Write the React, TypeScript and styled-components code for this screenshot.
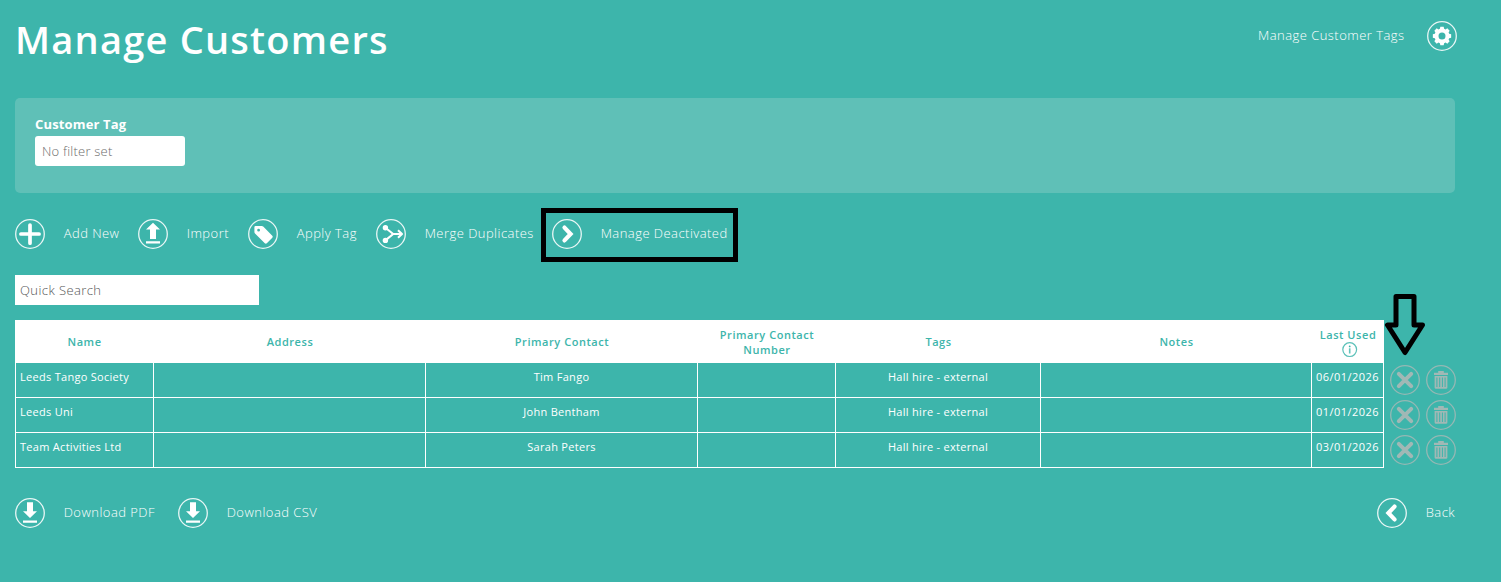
import React from "react";
import styled, { createGlobalStyle } from "styled-components";

const TEAL = "#3db5ab";

const GlobalStyle = createGlobalStyle`
  * { box-sizing: border-box; }
  html, body { margin: 0; background: ${TEAL}; }
  body { font-family: "Open Sans", sans-serif; color: #fff; overflow: hidden; }
`;

const Page = styled.main`
  width: 1501px;
  height: 582px;
  padding: 0 44px 0 15px;
  background: ${TEAL};
`;

const Header = styled.header`
  display: flex;
  justify-content: space-between;
  height: 98px;
`;

const Title = styled.h1`
  margin: 13px 0 0;
  font-size: 38px;
  line-height: 52px;
  font-weight: 600;
  letter-spacing: 1.23px;
  white-space: nowrap;
`;

const HeaderLink = styled.div`
  display: flex;
  gap: 22.5px;
  margin-top: 21px;
  height: 30px;
`;

const Label = styled.span`
  font-size: 13px;
  line-height: 18px;
  padding-top: 5px;
  font-weight: 300;
  letter-spacing: 0.46px;
  white-space: nowrap;
`;

const FilterPanel = styled.section`
  width: 1440px;
  height: 95px;
  padding: 17px 20px;
  border-radius: 5px;
  background: #5fc0b7;
`;

const FilterLabel = styled.label`
  display: block;
  height: 21px;
  font-size: 13px;
  line-height: 19px;
  font-weight: 700;
  letter-spacing: 0.15px;
`;

const Field = styled.div`
  height: 30px;
  background: #fff;
  font-size: 13px;
  line-height: 30px;
  font-weight: 300;
`;

const FilterField = styled(Field)`
  width: 150px;
  padding-left: 7px;
  border-radius: 3px;
  color: #6c6c6c;
  letter-spacing: 0.22px;
`;

const SearchField = styled(Field)`
  width: 244px;
  padding-left: 5px;
  color: #555;
  letter-spacing: 0.42px;
`;

const Toolbar = styled.nav`
  display: flex;
  height: 82px;
  padding-top: 26px;
`;

const Action = styled.div<{ $width?: number }>`
  position: relative;
  display: flex;
  gap: 18.7px;
  width: ${(p) => (p.$width ? p.$width + "px" : "auto")};
  height: 30px;
`;

const Highlight = styled.div`
  position: absolute;
  left: -11px;
  top: -11px;
  width: 197px;
  height: 54px;
  border: 5px solid #000;
`;

const TableArea = styled.section`
  position: relative;
  margin-top: 15px;
`;

const Row = styled.div<{ $head?: boolean }>`
  display: grid;
  grid-template-columns: 139px 272px 272px 138px 205px 271px 72px 42px 30px;
  height: ${(p) => (p.$head ? 43 : 35)}px;
`;

const HeadCell = styled.div<{ $tall?: boolean }>`
  padding-top: ${(p) => (p.$tall ? 7 : 14)}px;
  background: #fff;
  color: ${TEAL};
  font-size: 11px;
  line-height: 15px;
  font-weight: 600;
  letter-spacing: 0.55px;
  text-align: center;
  white-space: pre-line;
`;

const Cell = styled.div<{ $left?: boolean }>`
  padding: 6px 0 0 ${(p) => (p.$left ? 4 : 0)}px;
  border: solid #fff;
  border-width: ${(p) => (p.$left ? "0 1px 1px 1px" : "0 1px 1px 0")};
  font-size: 11px;
  line-height: 15px;
  letter-spacing: 0.29px;
  text-align: ${(p) => (p.$left ? "left" : "center")};
  white-space: nowrap;
`;

const DateCell = styled(Cell)`
  letter-spacing: 0.45px;
`;

const RowIcon = styled.div<{ $indent?: boolean }>`
  padding: 2px 0 0 ${(p) => (p.$indent ? 6 : 0)}px;
  color: #a1b8b5;
`;

const Pointer = styled.svg`
  position: absolute;
  left: 1369px;
  top: -27px;
`;

const Footer = styled.footer`
  display: flex;
  padding-top: 30px;
`;

const BackAction = styled(Action)`
  margin-left: auto;
  width: 80px;
`;

const Svg = styled.svg`
  display: block;
  flex: none;
`;

const InfoSvg = styled(Svg)`
  margin: 0 auto;
  position: relative;
  left: 1.5px;
`;

type IconName = "gear" | "plus" | "upload" | "tag" | "merge" | "right" | "left" | "download" | "cross" | "bin";

const gearPath = (() => {
  const pts: string[] = [];
  for (let i = 0; i < 8; i++) {
    const a = (i * Math.PI) / 4;
    [[-0.29, 7.5], [-0.18, 9.3], [0.18, 9.3], [0.29, 7.5]].forEach(([d, r]) => {
      pts.push(`${(15 + r * Math.sin(a + d)).toFixed(2)} ${(15 - r * Math.cos(a + d)).toFixed(2)}`);
    });
  }
  return `M${pts.join("L")}ZM15 11.5a3.5 3.5 0 1 0 0 7a3.5 3.5 0 1 0 0-7Z`;
})();

const glyphs: Record<IconName, React.ReactNode> = {
  gear: <path d={gearPath} fill="currentColor" fillRule="evenodd" />,
  plus: <path d="M15 6V24.2M5.9 15H24.1" stroke="currentColor" strokeWidth="3.7" strokeLinecap="round" />,
  upload: <path d="M15 3.8L22 10.6H18V20H12V10.6H8ZM8 22.3H22V24.4H8Z" fill="currentColor" />,
  tag: (
    <path
      d="M7.6 7H13.8Q14.6 7 15.2 7.6L24.3 16.8Q25.3 17.8 24.3 18.8L18.8 24.2Q17.8 25.1 16.8 24.2L7 14.4Q6.4 13.8 6.4 13V8.2Q6.4 7 7.6 7ZM10.6 9.8A1.4 1.4 0 1 0 10.6 12.6A1.4 1.4 0 1 0 10.6 9.8Z"
      fill="currentColor"
      fillRule="evenodd"
    />
  ),
  merge: (
    <>
      <circle cx="9.4" cy="8.8" r="2.7" fill="currentColor" />
      <circle cx="9.4" cy="21.4" r="2.7" fill="currentColor" />
      <path d="M9.4 8.8L17.2 15L9.4 21.4M17.2 15H25.5M22 11.3L26 15L22 18.7" stroke="currentColor" strokeWidth="2.1" fill="none" strokeLinejoin="round" />
    </>
  ),
  right: <path d="M12.5 8.6L18.6 15L12.5 21.4" stroke="currentColor" strokeWidth="4.2" strokeLinecap="round" fill="none" />,
  left: <path d="M17.5 8.6L11.4 15L17.5 21.4" stroke="currentColor" strokeWidth="4.2" strokeLinecap="round" fill="none" />,
  download: <path d="M12 4.2H18V13.2H22L15 20L8 13.2H12ZM8 22.6H22V24.7H8Z" fill="currentColor" />,
  cross: <path d="M8.8 8.8L21.2 21.2M21.2 8.8L8.8 21.2" stroke="currentColor" strokeWidth="4" strokeLinecap="round" />,
  bin: (
    <>
      <path d="M12.2 6H17.8V8H12.2ZM8 7.8H22V10H8Z" fill="currentColor" />
      <path
        d="M8.6 11H21.4V22.4Q21.4 23.8 20 23.8H10Q8.6 23.8 8.6 22.4ZM10.4 12.4V22H11.4V12.4ZM13.2 12.4V22H14.2V12.4ZM15.9 12.4V22H16.9V12.4ZM18.6 12.4V22H19.6V12.4Z"
        fill="currentColor"
        fillRule="evenodd"
      />
    </>
  ),
};

const CircleIcon = ({ name }: { name: IconName }) => (
  <Svg width="30" height="30" viewBox="0 0 30 30" fill="none">
    <circle cx="15" cy="15" r="14.3" stroke="currentColor" strokeWidth="1.3" strokeOpacity="0.88" />
    {glyphs[name]}
  </Svg>
);

const InfoIcon = () => (
  <InfoSvg width="16" height="16" viewBox="0 0 16 16" fill="none">
    <circle cx="7.7" cy="7.6" r="6.9" stroke={TEAL} strokeWidth="1.2" strokeOpacity="0.85" />
    <path d="M7.7 6.3V11.5" stroke={TEAL} strokeWidth="1.6" strokeOpacity="0.8" />
    <circle cx="7.7" cy="4.4" r="0.9" fill={TEAL} />
  </InfoSvg>
);

const actions: { icon: IconName; label: string; width: number; highlighted?: boolean }[] = [
  { icon: "plus", label: "Add New", width: 123 },
  { icon: "upload", label: "Import", width: 110 },
  { icon: "tag", label: "Apply Tag", width: 128 },
  { icon: "merge", label: "Merge Duplicates", width: 176 },
  { icon: "right", label: "Manage Deactivated", width: 180, highlighted: true },
];

const headings = ["Name", "Address", "Primary Contact", "Primary Contact\nNumber", "Tags", "Notes"];

const customers = [
  { name: "Leeds Tango Society", contact: "Tim Fango", tags: "Hall hire - external", used: "06/01/2026" },
  { name: "Leeds Uni", contact: "John Bentham", tags: "Hall hire - external", used: "01/01/2026" },
  { name: "Team Activities Ltd", contact: "Sarah Peters", tags: "Hall hire - external", used: "03/01/2026" },
];

export default function App() {
  return (
    <>
      <GlobalStyle />
      <Page>
        <Header>
          <Title>Manage Customers</Title>
          <HeaderLink>
            <Label>Manage Customer Tags</Label>
            <CircleIcon name="gear" />
          </HeaderLink>
        </Header>
        <FilterPanel>
          <FilterLabel>Customer Tag</FilterLabel>
          <FilterField>No filter set</FilterField>
        </FilterPanel>
        <Toolbar>
          {actions.map((a) => (
            <Action key={a.label} $width={a.width}>
              <CircleIcon name={a.icon} />
              <Label>{a.label}</Label>
              {a.highlighted && <Highlight />}
            </Action>
          ))}
        </Toolbar>
        <SearchField>Quick Search</SearchField>
        <TableArea>
          <Row $head>
            {headings.map((h) => (
              <HeadCell key={h} $tall={h.includes("\n")}>{h}</HeadCell>
            ))}
            <HeadCell $tall>
              Last Used
              <InfoIcon />
            </HeadCell>
          </Row>
          {customers.map((c) => (
            <Row key={c.name}>
              <Cell $left>{c.name}</Cell>
              <Cell />
              <Cell>{c.contact}</Cell>
              <Cell />
              <Cell>{c.tags}</Cell>
              <Cell />
              <DateCell>{c.used}</DateCell>
              <RowIcon $indent><CircleIcon name="cross" /></RowIcon>
              <RowIcon><CircleIcon name="bin" /></RowIcon>
            </Row>
          ))}
          <Pointer width="42" height="64" viewBox="0 0 42 64" fill="none">
            <path d="M12 3.5H30V32H38.5L21 59.5L3.5 32H12Z" stroke="#000" strokeWidth="5" strokeLinejoin="round" />
          </Pointer>
        </TableArea>
        <Footer>
          <Action $width={163}>
            <CircleIcon name="download" />
            <Label>Download PDF</Label>
          </Action>
          <Action>
            <CircleIcon name="download" />
            <Label>Download CSV</Label>
          </Action>
          <BackAction>
            <CircleIcon name="left" />
            <Label>Back</Label>
          </BackAction>
        </Footer>
      </Page>
    </>
  );
}
